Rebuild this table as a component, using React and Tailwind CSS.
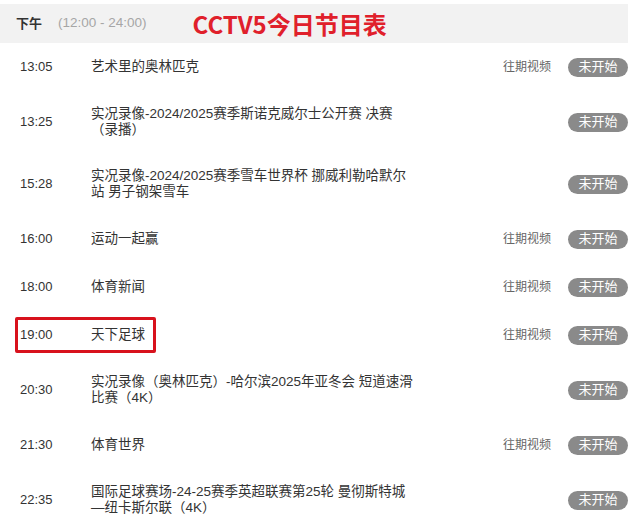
import React from 'react';

const rows = [
  { t: '13:05', title: ['艺术里的奥林匹克'], past: true },
  { t: '13:25', title: ['实况录像-2024/2025赛季斯诺克威尔士公开赛 决赛', '（录播）'], past: false },
  { t: '15:28', title: ['实况录像-2024/2025赛季雪车世界杯 挪威利勒哈默尔', '站 男子钢架雪车'], past: false },
  { t: '16:00', title: ['运动一起赢'], past: true },
  { t: '18:00', title: ['体育新闻'], past: true },
  { t: '19:00', title: ['天下足球'], past: true, mark: true },
  { t: '20:30', title: ['实况录像（奥林匹克）-哈尔滨2025年亚冬会 短道速滑', '比赛（4K）'], past: false },
  { t: '21:30', title: ['体育世界'], past: true },
  { t: '22:35', title: ['国际足球赛场-24-25赛季英超联赛第25轮 曼彻斯特城', '—纽卡斯尔联（4K）'], past: false },
];

const font = { fontFamily: '"Liberation Sans", "Noto Sans CJK SC", sans-serif' };

export default function App() {
  return (
    <div className="w-[640px] h-[521px] overflow-hidden bg-white pt-[4px]" style={font}>
      <div className="w-[628px]">
        {/* header */}
        <div className="h-[39px] bg-[#f2f2f2] flex items-center pl-[16px]">
          <span className="text-[13px] font-bold text-[#333]">下午</span>
          <span className="ml-[16px] text-[13.5px] text-[#a6a6a6]">(12:00 - 24:00)</span>
          <span className="ml-[46px] text-[24px] font-bold text-[#e0202b] leading-none" style={{ fontFamily: '"Noto Sans CJK SC", sans-serif' }}>CCTV5今日节目表</span>
        </div>

        {rows.map(r => (
          <div key={r.t} className={`relative flex items-center text-[#333] ${r.title.length > 1 ? 'h-[62px]' : 'h-[48px]'}`}>
            <div className="w-[91px] pl-[20px] text-[13px]">{r.t}</div>
            <div className="flex-1 text-[13.5px] leading-[16px]">
              {r.title.map((l, i) => <div key={i}>{l}</div>)}
            </div>
            {r.past && <span className="text-[12px] text-[#666] mr-[17px]">往期视频</span>}
            <span className="w-[60px] h-[19px] rounded-full bg-[#8a8a8a] text-white text-[13px] flex items-center justify-center">未开始</span>
            {r.mark && <div className="absolute left-[15px] top-[6px] w-[141px] h-[36px] border-[3px] border-[#d8121d] rounded-[2px]" />}
          </div>
        ))}
      </div>
    </div>
  );
}
